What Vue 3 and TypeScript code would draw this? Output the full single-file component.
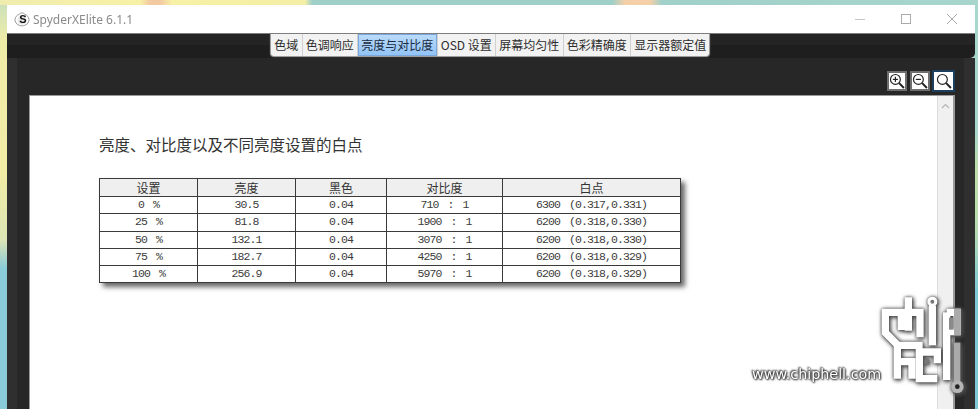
<script setup lang="ts">
const tabs = ['色域', '色调响应', '亮度与对比度', 'OSD 设置', '屏幕均匀性', '色彩精确度', '显示器额定值']
const activeTab = '亮度与对比度'
const headers = ['设置', '亮度', '黑色', '对比度', '白点']
const rows = [
  ['0 %', '30.5', '0.04', '710 : 1', '6300 (0.317,0.331)'],
  ['25 %', '81.8', '0.04', '1900 : 1', '6200 (0.318,0.330)'],
  ['50 %', '132.1', '0.04', '3070 : 1', '6200 (0.318,0.330)'],
  ['75 %', '182.7', '0.04', '4250 : 1', '6200 (0.318,0.329)'],
  ['100 %', '256.9', '0.04', '5970 : 1', '6200 (0.318,0.329)'],
]
const zooms = [
  { id: 'in', active: false },
  { id: 'out', active: false },
  { id: 'fit', active: true },
]
</script>

<template>
  <div class="desktop">
    <div class="window">
      <header class="titlebar">
        <svg class="app-logo" width="16" height="16" viewBox="0 0 16 16">
          <path d="M5.5 3.2C6 1.4 10 1.4 10.5 3.2C13 4 15 6.3 15 8.6C15 12 12 14.8 8 14.8C4 14.8 1 12 1 8.6C1 6.3 3 4 5.5 3.2Z" fill="#fff" stroke="#999" stroke-width="1" />
          <circle cx="8" cy="9" r="4.6" fill="#e8e8e8" />
        </svg>
        <span class="app-s">S</span>
        <span class="app-title">SpyderXElite 6.1.1</span>
        <div class="controls">
          <span class="ctrl">
            <svg width="12" height="12" viewBox="0 0 12 12"><path d="M1 6.5H11" stroke="#c4c4c4" stroke-width="1" /></svg>
          </span>
          <span class="ctrl">
            <svg width="12" height="12" viewBox="0 0 12 12"><rect x="1.5" y="1.5" width="9" height="9" fill="none" stroke="#aaa" stroke-width="1" /></svg>
          </span>
          <span class="ctrl">
            <svg width="12" height="12" viewBox="0 0 12 12"><path d="M1 1L11 11M11 1L1 11" stroke="#aaa" stroke-width="1" /></svg>
          </span>
        </div>
      </header>

      <div class="tabstrip">
        <nav class="tabs">
          <span v-for="t in tabs" :key="t" class="tab" :class="{ active: t === activeTab }">{{ t }}</span>
        </nav>
      </div>

      <div class="gutters">
        <main class="inner">
          <div class="zoombar">
            <button v-for="z in zooms" :key="z.id" class="zoombtn" :class="{ active: z.active }">
              <svg width="16" height="16" viewBox="0 0 15 15">
                <circle cx="6" cy="6" r="4.6" fill="none" stroke="#222" stroke-width="1.1" />
                <path d="M9.5 9.5L14 14" stroke="#222" stroke-width="1.9" />
                <path v-if="z.id !== 'fit'" d="M3.6 6H8.4" stroke="#222" stroke-width="1.1" />
                <path v-if="z.id === 'in'" d="M6 3.6V8.4" stroke="#222" stroke-width="1.1" />
              </svg>
            </button>
          </div>

          <section class="page">
            <div class="doc">
              <h1 class="doc-title">亮度、对比度以及不同亮度设置的白点</h1>
              <table class="data">
                <colgroup>
                  <col style="width: 98px" />
                  <col style="width: 98px" />
                  <col style="width: 91px" />
                  <col style="width: 116px" />
                  <col style="width: 178px" />
                </colgroup>
                <thead>
                  <tr><th v-for="h in headers" :key="h">{{ h }}</th></tr>
                </thead>
                <tbody>
                  <tr v-for="r in rows" :key="r[0]">
                    <td v-for="(c, i) in r" :key="i">{{ c }}</td>
                  </tr>
                </tbody>
              </table>
            </div>
            <aside class="scrollbar">
              <svg width="9" height="6" viewBox="0 0 9 6"><path d="M1 5L4.5 1.5L8 5" fill="none" stroke="#b5b5b5" stroke-width="1.2" /></svg>
            </aside>
          </section>
        </main>
      </div>
    </div>

    <div class="watermark">
      <svg class="wm-logo" width="238" height="129" viewBox="0 0 714 387">
        <g fill="none" stroke="#fff" stroke-width="22" stroke-linecap="butt" stroke-linejoin="miter">
          <path d="M484 150V97H436V158L474 196H548" />
          <path d="M505 52V152M505 97H540V172" />
          <path d="M577 78V196" />
          <path d="M620 97V300" />
          <path d="M620 97H651V155H620" />
          <path d="M472 196V296M472 245H516V296" />
          <path d="M592 250V216H538V296H592" />
        </g>
        <circle cx="577" cy="65" r="15" fill="#fff" />
        <circle cx="577" cy="65" r="6" fill="#777" />
        <circle cx="560" cy="245" r="8" fill="#777" />
        <rect x="627" y="113" width="14" height="36" fill="#8a8a8a" />
        <rect x="642" y="86" width="20" height="80" fill="#aaa" />
        <rect x="641" y="188" width="20" height="122" fill="#aaa" />
        <circle cx="652" cy="320" r="19" fill="#b5b5b5" />
        <circle cx="652" cy="320" r="7" fill="#222" />
      </svg>
      <span class="wm-text">www.chiphell.com</span>
    </div>
  </div>
</template>

<style scoped>
.desktop {
  position: relative;
  width: 978px;
  height: 409px;
  overflow: hidden;
  box-sizing: border-box;
  padding: 5px 3px 0 7px;
  background:
    linear-gradient(90deg, #f0ecae 0, #f7f1a6 140px, #f3c9a2 150px, #f3c9a2 160px, #f7f1a6 172px, #f4eea6 305px, #9fcfc9 312px, #9fcfc9 612px, #f4cfa8 625px, #f4cfa8 650px, #9fd0c9 662px, #a8d6cd 978px) top / 100% 5px no-repeat,
    linear-gradient(180deg, #c8e0bd 0, #efeca8 40px, #f3eda5 170px, #dce5b6 240px, #8acbd9 268px, #8acbd9 409px) left / 7px 100% no-repeat,
    linear-gradient(180deg, #a6d6cc 0, #a6d6cc 130px, #bfdfa8 170px, #b8dcb0 230px, #7fc8d8 290px, #7fc8d8 409px) right / 3px 100% no-repeat,
    #a6d6cc;
}
.window {
  display: flex;
  flex-direction: column;
  height: 100%;
  font-family: "Noto Sans", "Noto Sans CJK SC", sans-serif;
  filter: blur(0.35px);
}
.titlebar {
  display: flex;
  align-items: center;
  flex: none;
  height: 28px;
  background: #fff;
  border-bottom: 1px solid #7d7d7d;
  padding-left: 7px;
  position: relative;
}
.app-logo {
  flex: none;
}
.app-s {
  position: absolute;
  left: 10px;
  top: 6px;
  width: 12px;
  text-align: center;
  font: 700 11px/16px "Liberation Sans", sans-serif;
  color: #111;
}
.app-title {
  margin-left: 3px;
  font-size: 12px;
  color: #8a8a8a;
}
.controls {
  margin-left: auto;
  display: flex;
}
.ctrl {
  width: 46px;
  height: 28px;
  display: flex;
  align-items: center;
  justify-content: center;
}
.tabstrip {
  flex: none;
  height: 24px;
  box-sizing: border-box;
  padding-right: 2px;
  display: flex;
  justify-content: center;
  background: linear-gradient(180deg, #242424 0, #242424 11px, #1e1e1e 11px);
  border-radius: 0 0 5px 0;
}
.tabs {
  display: flex;
  height: 22px;
  background: #f2f2f2;
  border-radius: 0 0 3px 3px;
  box-shadow: 0 0 1px 1px #aaa;
}
.tab {
  padding: 0 3.5px;
  font-family: "Noto Sans CJK SC", "Noto Sans", sans-serif;
  font-size: 12px;
  line-height: 22px;
  color: #2d2d2d;
  border-right: 1px solid #d0d0d0;
  margin-right: -0.5px;
  white-space: nowrap;
}
.tab:last-child {
  border-right: 0;
}
.tab.active {
  background: linear-gradient(180deg, #bcdcfb, #8fc2f5);
  box-shadow: inset 0 0 0 1px #7aa7dc;
  color: #1b2a3d;
}
.gutters {
  flex: 1;
  min-height: 0;
  display: flex;
  padding: 0 11px 0 10px;
  background: #2f2f2f;
}
.inner {
  flex: 1;
  min-width: 0;
  display: flex;
  flex-direction: column;
  background: #272727;
  padding: 0 9px 0 12px;
}
.zoombar {
  flex: none;
  height: 37px;
  box-sizing: border-box;
  padding-top: 13px;
  display: flex;
  justify-content: flex-end;
  align-items: flex-start;
  gap: 3px;
}
.zoombtn {
  flex: none;
  width: 20px;
  height: 20px;
  padding: 0;
  box-sizing: border-box;
  border: 2px solid #6e6e6e;
  background: #fff;
  display: flex;
  align-items: center;
  justify-content: center;
}
.zoombtn.active {
  width: 23px;
  height: 22px;
  margin: -1px 0 0 -1px;
  border-color: #1d3f5e;
}
.page {
  flex: 1;
  min-height: 0;
  display: flex;
  background: #fff;
  border: 1.5px solid #9a9a9a;
  border-bottom: 0;
  border-right-width: 2px;
}
.doc {
  flex: 1;
  min-width: 0;
  padding: 37px 0 0 69px;
}
.doc-title {
  margin: 0 0 23px;
  font-family: "Noto Sans CJK SC", sans-serif;
  font-size: 15.5px;
  line-height: 22px;
  font-weight: 400;
  color: #333;
}
.data {
  border-collapse: collapse;
  table-layout: fixed;
  width: 581px;
  box-shadow: 4px 4px 5px rgba(0, 0, 0, 0.6);
  font-family: "Liberation Mono", "Noto Sans CJK SC", monospace;
  font-size: 11.5px;
  letter-spacing: -0.9px;
  word-spacing: 3px;
  color: #3c3c3c;
}
.data th,
.data td {
  border: 1px solid #3a3a3a;
  height: 16.3px;
  padding: 0;
  text-align: center;
  font-weight: 400;
  line-height: 14px;
  white-space: pre;
}
.data th {
  height: 17px;
  background: #efefef;
  font-family: "Noto Sans CJK SC", sans-serif;
  font-size: 12px;
  letter-spacing: 0;
  color: #333;
}
.data td {
  background: #fff;
}
.scrollbar {
  flex: none;
  width: 16px;
  background: #f0f0f0;
  border-left: 1px solid #ddd;
  display: flex;
  justify-content: center;
  align-items: flex-start;
  padding-top: 7px;
  box-sizing: border-box;
}
.watermark {
  position: absolute;
  left: 740px;
  top: 280px;
  width: 238px;
  height: 129px;
}
.wm-logo {
  position: absolute;
  left: 0;
  top: 0;
  filter: drop-shadow(1px 1px 2px #444) drop-shadow(0 0 1px #666);
}
.wm-text {
  position: absolute;
  left: 12px;
  top: 85px;
  font-family: "DejaVu Sans", sans-serif;
  font-size: 14.3px;
  line-height: 18px;
  color: #fff;
  white-space: nowrap;
  text-shadow: 0 0 2px #333, 0 0 2px #333, 1px 1px 2px #333, -1px -1px 2px #333;
}
</style>

<style>
html,
body {
  margin: 0;
  overflow: hidden;
}
</style>
